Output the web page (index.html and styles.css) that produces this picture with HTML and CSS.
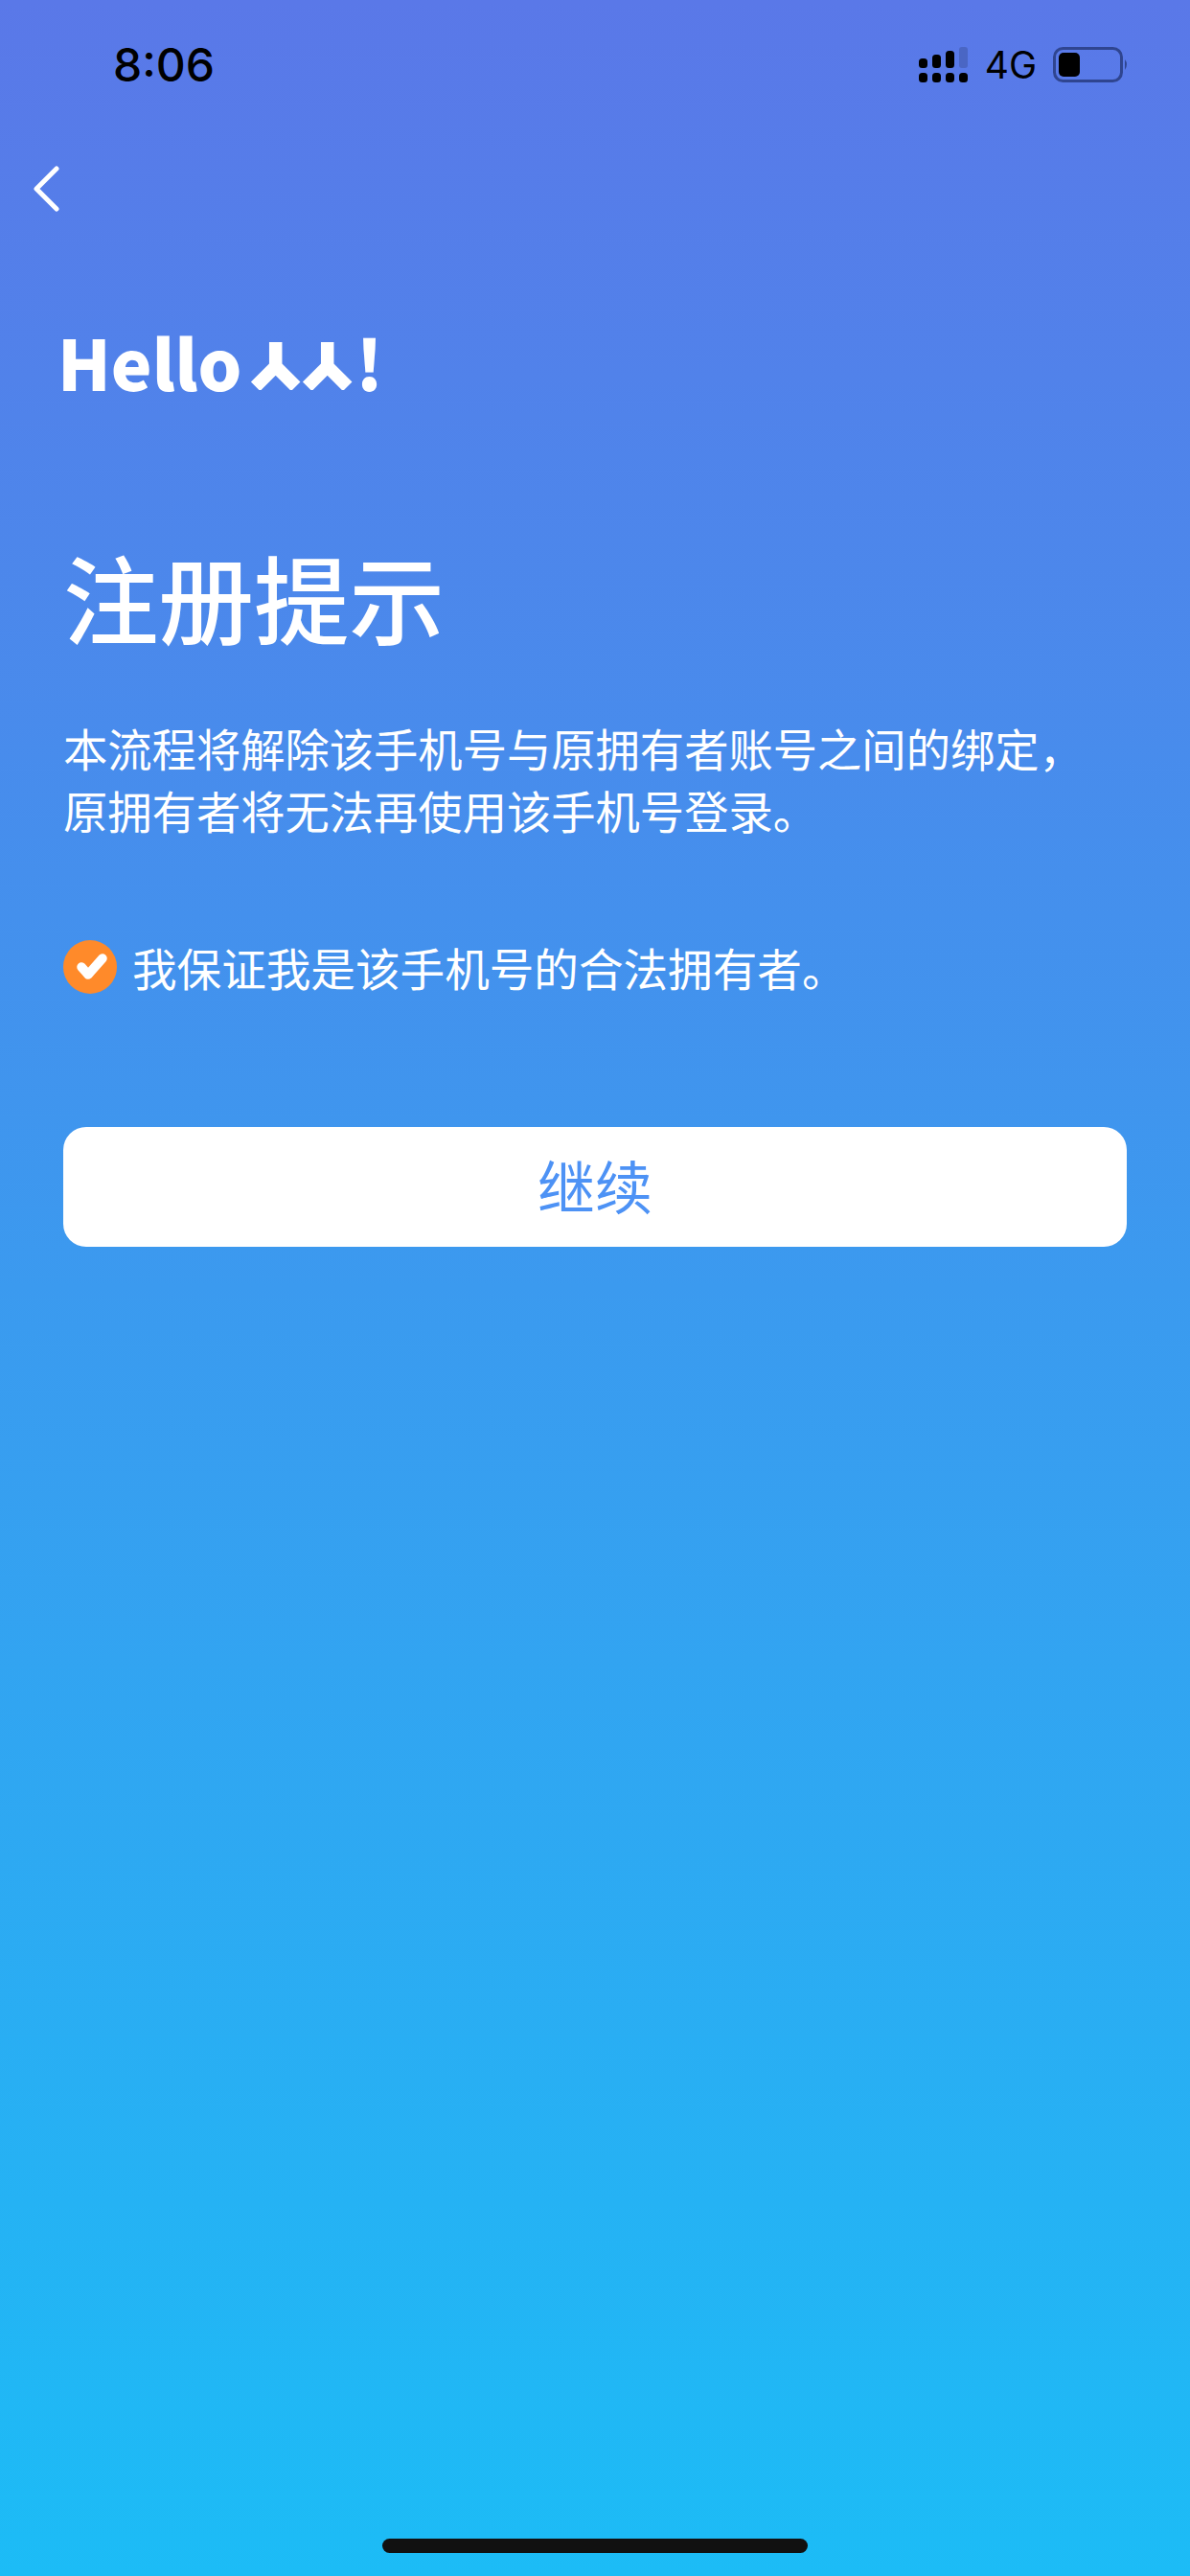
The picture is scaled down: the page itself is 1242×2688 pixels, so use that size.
FILE: index.html
```html
<!DOCTYPE html>
<html lang="zh-CN">
<head>
<meta charset="utf-8">
<title>注册提示</title>
<link rel="stylesheet" href="styles.css">
</head>
<body>
<div class="screen">
  <header class="status">
    <span class="time">8:06</span>
    <div class="status-right">
      <svg class="signal" width="52" height="38" viewBox="0 0 52 38">
        <rect x="0" y="12" width="9" height="10" rx="3.5"/>
        <rect x="14" y="8" width="9" height="14" rx="3.5"/>
        <rect x="28" y="4" width="9" height="18" rx="3.5"/>
        <rect class="dim" x="42" y="0" width="9" height="22" rx="3"/>
        <rect x="0" y="27" width="9" height="10" rx="3.5"/>
        <rect x="14" y="27" width="9" height="10" rx="3.5"/>
        <rect x="28" y="27" width="9" height="10" rx="3.5"/>
        <rect x="42" y="27" width="9" height="10" rx="3.5"/>
      </svg>
      <span class="net">4G</span>
      <svg class="battery" width="80" height="38" viewBox="0 0 80 38">
        <rect class="batt-frame" x="1.5" y="1.5" width="70" height="34" rx="9"/>
        <rect x="6" y="6" width="22" height="25" rx="5"/>
        <path class="batt-cap" d="M75 13q4 5 0 11z"/>
      </svg>
    </div>
  </header>

  <nav class="nav">
    <svg width="30" height="48" viewBox="0 0 30 48"><path class="back" d="M25 3 4 24l21 21"/></svg>
  </nav>

  <main class="content">
    <div class="brand">
      <span>Hello</span>
      <svg class="logo" width="108" height="60" viewBox="0 0 108 60">
        <path class="logo-stroke" d="M27.7 10V35M6.7 56.3l21-21 21 21M81.7 10V35M60.7 56.3l21-21 21 21"/>
      </svg>
      <span class="bang">!</span>
    </div>
    <h1 class="title">注册提示</h1>
    <p class="desc">本流程将解除该手机号与原拥有者账号之间的绑定，<br>原拥有者将无法再使用该手机号登录。</p>
    <div class="agree">
      <svg class="check" width="56" height="56" viewBox="0 0 56 56">
        <circle class="check-bg" cx="28" cy="28" r="28"/>
        <path class="check-mark" d="M19 28l7 8 15-17"/>
      </svg>
      <span>我保证我是该手机号的合法拥有者。</span>
    </div>
    <button class="btn" type="button"><span class="btn-label">继续</span></button>
  </main>

  <div class="home"></div>
</div>
</body>
</html>
```
FILE: styles.css
```css
* { box-sizing: border-box; }
html, body { margin: 0; padding: 0; }
body { font-family: "Noto Sans CJK SC", "Noto Sans", sans-serif; }

.screen {
  position: relative;
  width: 1242px;
  height: 2688px;
  overflow: hidden;
  color: #fff;
  background: linear-gradient(180deg, #5a78e8 0%, #1cbcf6 100%);
}

.status {
  height: 136px;
  padding: 40px 63px 0 118px;
  display: flex;
  justify-content: space-between;
  align-items: flex-start;
  color: #000;
}
.time {
  font: 500 48px/56px Inter, sans-serif;
}
.status-right {
  display: flex;
  align-items: center;
  gap: 17px;
  padding-top: 8px;
}
.signal rect { fill: #000; }
.signal .dim { fill: #4a66c4; }
.net { font: 400 39px/40px Inter, sans-serif; }
.batt-frame { fill: none; stroke: #2f4590; stroke-width: 3; }
.batt-cap { fill: #2f4590; }

.nav { height: 97px; padding: 37px 0 0 34px; }
.back { fill: none; stroke: #fff; stroke-width: 5; stroke-linecap: round; stroke-linejoin: round; }

.content { padding: 108px 66px 0; }

.brand {
  display: flex;
  align-items: center;
  height: 72px;
  margin-left: -6px;
  font-size: 72px;
  line-height: 72px;
  font-weight: 900;
}
.logo { margin-left: 8px; }
.logo-stroke { fill: none; stroke: #fff; stroke-width: 13.5; }
.bang { margin-left: 3px; }

.title {
  margin: 139px 0 0;
  font-size: 99.5px;
  line-height: 140px;
  font-weight: 500;
}

.desc {
  margin: 55px 0 0;
  font-size: 46.3px;
  line-height: 65px;
  font-weight: 400;
  white-space: nowrap;
}

.agree {
  margin-top: 104px;
  display: flex;
  align-items: center;
  gap: 16px;
  font-size: 46.6px;
  line-height: 56px;
}
.check { flex: none; }
.check-bg { fill: #ff8a2a; }
.check-mark { fill: none; stroke: #fff; stroke-width: 9.5; stroke-linecap: round; stroke-linejoin: round; }

.btn {
  display: block;
  width: 1110px;
  height: 125px;
  margin-top: 139px;
  padding: 0;
  border: 0;
  border-radius: 24px;
  background: #fff;
  color: #4d92f5;
  font-family: inherit;
  font-size: 60px;
}
.btn-label { display: block; margin-top: -6px; }

.home {
  position: absolute;
  left: 399px;
  bottom: 24px;
  width: 444px;
  height: 15px;
  border-radius: 8px;
  background: #111;
}
```
